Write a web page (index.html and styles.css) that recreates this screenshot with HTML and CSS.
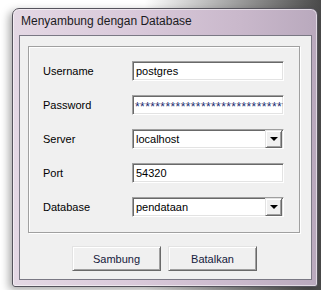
FILE: index.html
```html
<!DOCTYPE html>
<html lang="id">
<head>
    <meta charset="UTF-8">
    <title>Menyambung dengan Database</title>
    <link rel="stylesheet" href="styles.css">
</head>
<body>

<div class="window">
    <div class="title">Menyambung dengan Database</div>
    <div class="client">
        <div class="group">
            <div class="row">
                <span class="label">Username</span>
                <div class="field">postgres</div>
            </div>
            <div class="row">
                <span class="label">Password</span>
                <div class="field secret">**********************************</div>
            </div>
            <div class="row">
                <span class="label">Server</span>
                <div class="field combo">
                    <span class="value">localhost</span>
                    <span class="arrow"></span>
                </div>
            </div>
            <div class="row">
                <span class="label">Port</span>
                <div class="field">54320</div>
            </div>
            <div class="row">
                <span class="label">Database</span>
                <div class="field combo">
                    <span class="value">pendataan</span>
                    <span class="arrow"></span>
                </div>
            </div>
        </div>
        <div class="buttons">
            <button>Sambung</button>
            <button>Batalkan</button>
        </div>
    </div>
</div>

</body>
</html>
```

FILE: styles.css
```css
body {
    margin: 0;
    height: 290px;
    overflow: hidden;
    background: linear-gradient(to right, #ffffff 0%, #ffffff 45%, #8a8a8a 80%, #4a4a4a 100%);
    font-family: "Liberation Sans", Arial, sans-serif;
    font-size: 11px;
    color: #000;
}

.window {
    box-sizing: border-box;
    margin: 8px 0 0 12px;
    width: 306px;
    height: 279px;
    border: 1px solid #55535c;
    border-radius: 7px 7px 3px 3px;
    padding: 0 5px 6px 6px;
    display: flex;
    flex-direction: column;
    background: linear-gradient(to right, #e4d8e4 0%, #d9c9da 40%, #c9b8cb 75%, #b9a9bd 100%);
    box-shadow: -3px 3px 8px rgba(0, 0, 0, 0.35), inset 0 0 0 1px rgba(255, 255, 255, 0.55);
}

.title {
    height: 26px;
    line-height: 25px;
    padding-left: 2px;
    font-family: "Liberation Sans", Arial, sans-serif;
    font-size: 12px;
    color: #1b1b22;
}

.client {
    flex: 1;
    border: 1px solid #7a7884;
    background: #f0f0f0;
    padding: 10px 11px 0 8px;
}

.group {
    border: 1px solid #a0a0a0;
    box-shadow: inset 1px 1px 0 #fff, 1px 1px 0 #fff;
    padding: 14px 15px 15px 14px;
    display: flex;
    flex-direction: column;
    gap: 14px;
}

.row {
    display: flex;
    align-items: center;
    height: 20px;
}

.label {
    width: 89px;
    flex-shrink: 0;
}

.field {
    box-sizing: border-box;
    flex: 1;
    height: 20px;
    background: #fff;
    border: 1px solid;
    border-color: #a0a0a0 #fff #fff #a0a0a0;
    box-shadow: inset 1px 1px 0 #696969, inset -1px -1px 0 #e3e3e3;
    padding: 0 3px;
    line-height: 18px;
    white-space: nowrap;
    overflow: hidden;
    display: flex;
    align-items: center;
}

.secret {
    color: #1c2c70;
    font-size: 12px;
    letter-spacing: 0.4px;
    padding-top: 4px;
    padding-left: 2px;
}

.combo {
    padding-right: 1px;
}

.combo .value {
    flex: 1;
}

.arrow {
    box-sizing: border-box;
    width: 17px;
    height: 18px;
    background: #f0f0f0;
    border: 1px solid;
    border-color: #e3e3e3 #696969 #696969 #e3e3e3;
    box-shadow: inset 1px 1px 0 #fff, inset -1px -1px 0 #a0a0a0;
    display: flex;
    align-items: center;
    justify-content: center;
}

.arrow::after {
    content: "";
    border-left: 4px solid transparent;
    border-right: 4px solid transparent;
    border-top: 4px solid #000;
}

.buttons {
    display: flex;
    gap: 7px;
    padding: 13px 0 0 44px;
}

button {
    box-sizing: border-box;
    width: 89px;
    height: 25px;
    background: #f0f0f0;
    border: 1px solid;
    border-color: #e3e3e3 #696969 #696969 #e3e3e3;
    box-shadow: inset 1px 1px 0 #fff, inset -1px -1px 0 #a0a0a0;
    font-family: "Liberation Sans", Arial, sans-serif;
    font-size: 11px;
    color: #14203c;
    padding: 0;
}
```
